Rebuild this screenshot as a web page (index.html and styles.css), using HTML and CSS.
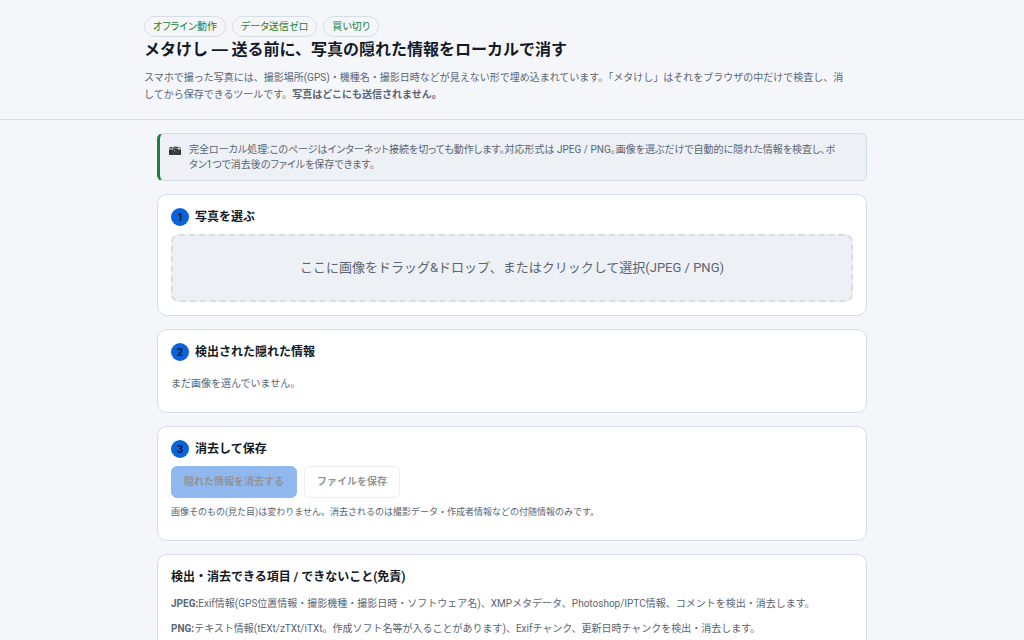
FILE: index.html
```
<!DOCTYPE html>
<html lang="ja">
<head>
    <meta charset="UTF-8">
    <meta name="viewport" content="width=device-width, initial-scale=1.0">
    <title>メタけし</title>
    <link rel="stylesheet" href="styles.css">
</head>
<body>
    <header>
        <div class="wrap">
            <div class="badges">
                <span class="badge">オフライン動作</span>
                <span class="badge">データ送信ゼロ</span>
                <span class="badge">買い切り</span>
            </div>
            <h1>メタけし — 送る前に、写真の隠れた情報をローカルで消す</h1>
            <p class="lead">スマホで撮った写真には、撮影場所(GPS)・機種名・撮影日時などが見えない形で埋め込まれています。「メタけし」はそれをブラウザの中だけで検査し、消してから保存できるツールです。<strong>写真はどこにも送信されません。</strong></p>
        </div>
    </header>

    <main class="wrap">
        <div class="notice">
            <svg class="camera" viewBox="0 0 24 18" aria-hidden="true">
                <path d="M2 4V2h4v2z" fill="#555"/>
                <path d="M8 4l2-3h7l2 3z" fill="#777"/>
                <rect x="0" y="3" width="24" height="15" rx="2" fill="#333"/>
                <rect x="0" y="4" width="24" height="4" fill="#8a8a8a"/>
                <rect x="18" y="4" width="4" height="2" fill="#ddd"/>
                <circle cx="13" cy="11" r="6" fill="#2a2a2a" stroke="#777"/>
                <circle cx="13" cy="11" r="3" fill="#465260"/>
                <circle cx="11" cy="9" r="1" fill="#ccc"/>
            </svg>
            <div>完全ローカル処理:このページはインターネット接続を切っても動作します。対応形式は JPEG / PNG。画像を選ぶだけで自動的に隠れた情報を検査し、ボタン1つで消去後のファイルを保存できます。</div>
        </div>

        <section class="card">
            <h2><span class="step">1</span>写真を選ぶ</h2>
            <label class="drop" for="file">ここに画像をドラッグ&amp;ドロップ、またはクリックして選択(JPEG / PNG)</label>
            <input type="file" id="file" accept="image/jpeg,image/png" hidden>
        </section>

        <section class="card">
            <h2><span class="step">2</span>検出された隠れた情報</h2>
            <p class="empty">まだ画像を選んでいません。</p>
        </section>

        <section class="card">
            <h2><span class="step">3</span>消去して保存</h2>
            <div class="actions">
                <button class="primary" id="clean" disabled>隠れた情報を消去する</button>
                <button id="save" disabled>ファイルを保存</button>
            </div>
            <p class="hint">画像そのもの(見た目)は変わりません。消去されるのは撮影データ・作成者情報などの付随情報のみです。</p>
        </section>

        <section class="card about">
            <h2>検出・消去できる項目 / できないこと(免責)</h2>
            <p><strong>JPEG:</strong>Exif情報(GPS位置情報・撮影機種・撮影日時・ソフトウェア名)、XMPメタデータ、Photoshop/IPTC情報、コメントを検出・消去します。</p>
            <p><strong>PNG:</strong>テキスト情報(tEXt/zTXt/iTXt。作成ソフト名等が入ることがあります)、Exifチャンク、更新日時チャンクを検出・消去します。</p>
        </section>
    </main>
</body>
</html>
```
FILE: styles.css
```
:root {
    --bg: #f4f6fa;
    --panel: #ffffff;
    --soft: #edf0f5;
    --line: #d5dde6;
    --text: #141a26;
    --muted: #5a6572;
    --accent: #0b63dc;
    --green: #1a7f37;
}

* {
    box-sizing: border-box;
}

body {
    margin: 0;
    background: var(--bg);
    color: var(--text);
    font-family: Roboto, "Noto Sans CJK JP", sans-serif;
    font-size: 13px;
    line-height: 1.6;
}

.wrap {
    max-width: 736px;
    margin: 0 auto;
}

header {
    padding: 16px 13px;
    border-bottom: 1px solid var(--line);
}

.badges {
    display: flex;
    gap: 6px;
}

.badge {
    padding: 2px 8px;
    border: 1px solid var(--line);
    border-radius: 999px;
    color: var(--green);
    font-size: 10px;
    line-height: 15px;
    font-feature-settings: "palt";
}

h1 {
    margin: 0 0 7px;
    font-family: Inter, "Noto Sans CJK JP", sans-serif;
    font-size: 16px;
    line-height: 25px;
}

.lead {
    max-width: 704px;
    margin: 0;
    color: var(--muted);
    font-size: 10px;
    line-height: 17px;
}

main {
    padding: 13px;
}

.notice {
    display: flex;
    gap: 8px;
    margin-bottom: 13px;
    padding: 8px 26px 8px 9px;
    background: var(--soft);
    border: 1px solid var(--line);
    border-left: 3px solid var(--green);
    border-radius: 6px;
    color: var(--muted);
    font-size: 10px;
    line-height: 15px;
    font-feature-settings: "palt";
}

.camera {
    flex: none;
    width: 12px;
    height: 9px;
    margin-top: 4px;
}

.card {
    margin-bottom: 13px;
    padding: 13px;
    background: var(--panel);
    border: 1px solid var(--line);
    border-radius: 10px;
}

h2 {
    display: flex;
    align-items: center;
    gap: 6px;
    margin: 0 0 8px;
    font-size: 12px;
    line-height: 18px;
}

.step {
    width: 18px;
    height: 18px;
    border-radius: 50%;
    background: var(--accent);
    font-family: Inter, sans-serif;
    font-size: 10px;
    text-align: center;
}

.drop {
    display: block;
    padding: 22px 16px;
    background: var(--soft);
    border: 2px dashed var(--line);
    border-radius: 8px;
    color: var(--muted);
    text-align: center;
    line-height: 20px;
    cursor: pointer;
}

.empty {
    margin: 14px 0 7px;
    color: var(--muted);
    font-size: 10px;
    line-height: 17px;
}

.actions {
    display: flex;
    gap: 7px;
}

button {
    padding: 7px 12px;
    background: var(--panel);
    border: 1px solid var(--line);
    border-radius: 6px;
    color: #101010;
    font-family: inherit;
    font-size: 10px;
    font-weight: 600;
    line-height: 16px;
    cursor: pointer;
}

button.primary {
    background: var(--accent);
    border-color: var(--accent);
}

button:disabled {
    opacity: 0.45;
    cursor: not-allowed;
}

.hint {
    margin: 7px 0 8px;
    color: var(--muted);
    font-size: 9px;
    line-height: 14px;
}

.about h2 {
    margin-bottom: 10px;
}

.about p {
    margin: 0 0 10px;
    color: var(--muted);
    font-size: 10px;
    line-height: 15px;
}
```
